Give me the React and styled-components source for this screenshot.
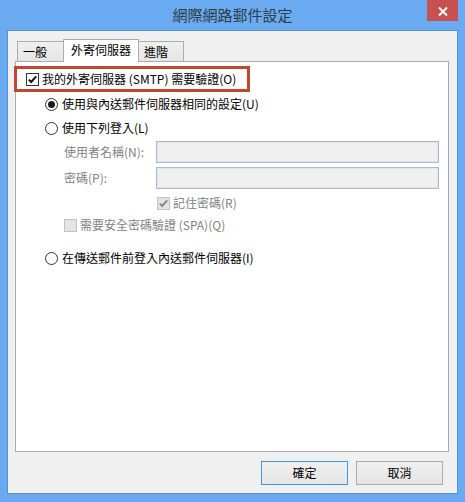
import React from "react";
import styled, { createGlobalStyle, css } from "styled-components";

const Global = createGlobalStyle`
  html, body { margin: 0; padding: 0; background: #6aaaf0; overflow: hidden; }
  body { font-family: "Noto Sans CJK TC", "Noto Sans", sans-serif; font-size: 12px; color: #000; }
  * { box-sizing: border-box; }
`;

const Window = styled.div`
  width: 465px;
  height: 502px;
  display: flex;
  flex-direction: column;
  background: #6aaaf0;
  overflow: hidden;
`;

const TitleBar = styled.div`
  flex: 0 0 30px;
  height: 30px;
  display: grid;
  grid-template-columns: 1fr auto 1fr;
  align-items: start;
`;

const Title = styled.div`
  grid-column: 2;
  font-size: 15px;
  line-height: 30px;
  color: #2f3b47;
`;

const CloseButton = styled.div`
  grid-column: 3;
  justify-self: end;
  margin-right: 7px;
  width: 31px;
  height: 21px;
  background: #c75050;
  display: flex;
  align-items: center;
  justify-content: center;
  padding-top: 2px;
`;

const Client = styled.div`
  flex: 0 0 464px;
  width: 451px;
  height: 464px;
  margin: 0 7px 8px 7px;
  border: 1px solid #5691d2;
  background: #f0f0f0;
  display: flex;
  flex-direction: column;
  padding: 8px 8px 0 7px;
`;

const TabStrip = styled.div`
  display: flex;
  align-items: flex-end;
  height: 23px;
  margin-bottom: -1px;
  padding-left: 2px;
  position: relative;
  z-index: 1;
`;

const Tab = styled.div`
  flex: 0 0 ${(p) => p.$w}px;
  width: ${(p) => p.$w}px;
  border: 1px solid #acacac;
  border-bottom: none;
  white-space: nowrap;
  & + & { margin-left: -1px; }
  ${(p) =>
    p.$active
      ? css`
          height: 23px;
          background: #fff;
          padding-left: 7px;
          line-height: 19px;
          position: relative;
          z-index: 2;
        `
      : css`
          height: 20px;
          margin-bottom: 1px;
          background: linear-gradient(#f0f0f0, #e5e5e5);
          padding-left: 5px;
          line-height: 20px;
        `}
`;

const Panel = styled.div`
  width: 434px;
  height: 391px;
  border: 1px solid #acacac;
  background: #fff;
  display: flex;
  flex-direction: column;
`;

const Highlight = styled.div`
  margin: 4px 0 0 -2px;
  width: 236px;
  height: 26px;
  border: 3px solid #c0472f;
  padding-left: 9px;
  display: flex;
  align-items: center;
  gap: 3px;
  white-space: nowrap;
`;

const Options = styled.div`
  margin-left: 29px;
  display: flex;
  flex-direction: column;
`;

const OptionRow = styled.div`
  height: ${(p) => p.$h || 20}px;
  margin-top: ${(p) => p.$mt}px;
  margin-left: ${(p) => p.$ml || 0}px;
  display: flex;
  align-items: center;
  gap: ${(p) => p.$gap ?? 4}px;
  white-space: nowrap;
  color: ${(p) => (p.$disabled ? "#838383" : "#000")};
`;

const Label = styled.span`
  line-height: 16px;
`;

const FieldLabel = styled.span`
  flex: 0 0 92px;
  width: 92px;
  min-width: 0;
  color: #838383;
  line-height: 16px;
`;

const Input = styled.div`
  flex: 0 0 283px;
  width: 283px;
  height: 22px;
  background: #f0f0f0;
  border: 1px solid #abbacb;
  box-shadow: inset 0 0 0 1px #dde5ee;
`;

const RadioCircle = styled.span`
  width: 13px;
  height: 13px;
  flex: 0 0 13px;
  border-radius: 50%;
  border: 1px solid #333;
  background: #fff;
  display: flex;
  align-items: center;
  justify-content: center;
  &::after {
    content: "";
    display: ${(p) => (p.$checked ? "block" : "none")};
    width: 7px;
    height: 7px;
    border-radius: 50%;
    background: #1c1c1c;
  }
`;

const Box = styled.span`
  width: 13px;
  height: 13px;
  flex: 0 0 13px;
  border: 1px solid ${(p) => (p.$disabled ? "#c2c2c2" : "#333")};
  background: ${(p) => (p.$disabled ? "#e4e4e4" : "#fff")};
  display: flex;
  align-items: center;
  justify-content: center;
`;

const ButtonRow = styled.div`
  margin-top: 9px;
  padding-right: 6px;
  display: flex;
  justify-content: flex-end;
  gap: 8px;
`;

const Button = styled.div`
  flex: 0 0 87px;
  width: 87px;
  height: 24px;
  border: 1px solid ${(p) => (p.$primary ? "#3e96e8" : "#acacac")};
  background: linear-gradient(#f0f0f0, #e5e5e5);
  display: flex;
  align-items: center;
  justify-content: center;
  line-height: 16px;
`;

const Check = ({ color }) => (
  <svg width="11" height="11" viewBox="0 0 11 11">
    <path d="M1.8 5.6 L4.2 8 L9.2 2.4" fill="none" stroke={color} strokeWidth="2" />
  </svg>
);

const Checkbox = ({ checked, disabled }) => (
  <Box $disabled={disabled}>{checked && <Check color={disabled ? "#8a8a8a" : "#111"} />}</Box>
);

export default function App() {
  return (
    <>
      <Global />
      <Window>
        <TitleBar>
          <Title>網際網路郵件設定</Title>
          <CloseButton>
            <svg width="10" height="9" viewBox="0 0 10 9">
              <path d="M1 0.5 L9 8.5 M9 0.5 L1 8.5" stroke="#fff" strokeWidth="2" />
            </svg>
          </CloseButton>
        </TitleBar>
        <Client>
          <TabStrip>
            <Tab $w={47}>一般</Tab>
            <Tab $w={76} $active>外寄伺服器</Tab>
            <Tab $w={46}>進階</Tab>
          </TabStrip>
          <Panel>
            <Highlight>
              <Checkbox checked />
              <Label>我的外寄伺服器 (SMTP) 需要驗證(O)</Label>
            </Highlight>
            <Options>
              <OptionRow $mt={2}>
                <RadioCircle $checked />
                <Label>使用與內送郵件伺服器相同的設定(U)</Label>
              </OptionRow>
              <OptionRow $mt={4}>
                <RadioCircle />
                <Label>使用下列登入(L)</Label>
              </OptionRow>
              <OptionRow $h={22} $mt={3} $ml={19} $gap={0}>
                <FieldLabel>使用者名稱(N):</FieldLabel>
                <Input />
              </OptionRow>
              <OptionRow $h={22} $mt={4} $ml={19} $gap={0}>
                <FieldLabel>密碼(P):</FieldLabel>
                <Input />
              </OptionRow>
              <OptionRow $h={16} $mt={6} $ml={112} $gap={3} $disabled>
                <Checkbox checked disabled />
                <Label>記住密碼(R)</Label>
              </OptionRow>
              <OptionRow $h={16} $mt={6} $ml={19} $gap={3} $disabled>
                <Checkbox disabled />
                <Label>需要安全密碼驗證 (SPA)(Q)</Label>
              </OptionRow>
              <OptionRow $mt={15}>
                <RadioCircle />
                <Label>在傳送郵件前登入內送郵件伺服器(I)</Label>
              </OptionRow>
            </Options>
          </Panel>
          <ButtonRow>
            <Button $primary>確定</Button>
            <Button>取消</Button>
          </ButtonRow>
        </Client>
      </Window>
    </>
  );
}
